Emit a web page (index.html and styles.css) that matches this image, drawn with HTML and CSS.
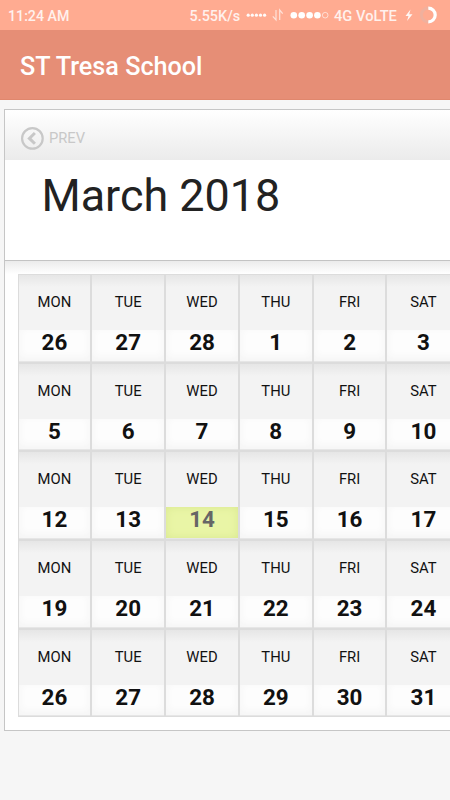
FILE: index.html
```html
<!DOCTYPE html>
<html lang="en">
<head>
<meta charset="utf-8">
<title>ST Tresa School</title>
<link rel="stylesheet" href="styles.css">
</head>
<body>
<div class="status">
  <span class="time">11:24 AM</span>
  <span class="speed">5.55K/s</span>
  <svg class="icons" width="84" height="30" viewBox="246 0 84 30">
    <g fill="#fff" opacity=".95"><circle cx="248.2" cy="15.2" r="1.6"/><circle cx="252.3" cy="15.2" r="1.6"/><circle cx="256.4" cy="15.2" r="1.6"/><circle cx="260.5" cy="15.2" r="1.6"/><circle cx="264.6" cy="15.2" r="1.6"/></g>
    <path d="M276 10v10l-3.2-3.7M279.7 20V10l3 3.7" fill="none" stroke="#fff" stroke-width="1.2" opacity=".65"/>
    <g fill="#fff"><circle cx="293.8" cy="15.2" r="3.3"/><circle cx="301.7" cy="15.2" r="3.3"/><circle cx="309.6" cy="15.2" r="3.3"/><circle cx="317.4" cy="15.2" r="3.3"/></g>
    <circle cx="325.2" cy="15.2" r="2.8" fill="none" stroke="#fff" opacity=".6"/>
  </svg>
  <span class="network">4G VoLTE</span>
  <svg class="battery" width="36" height="30" viewBox="402 0 36 30">
    <path d="M410.5 9.5l-5 6.5h3l-1.5 5 5.5-6.8h-3.3z" fill="#fff" opacity=".9"/>
    <circle cx="428.3" cy="15" r="6.9" fill="none" stroke="#f0b09d" stroke-width="3"/>
    <path d="M428.3 8.1a6.9 6.9 0 0 1 0 13.8" fill="none" stroke="#fff" stroke-width="3.2"/>
  </svg>
</div>
<header class="appbar">ST Tresa School</header>
<main class="calendar">
  <div class="nav">
    <svg width="24" height="24" viewBox="0 0 24 24" fill="none" stroke="#c8c8c8"><circle cx="12.4" cy="12.4" r="10.3" stroke-width="2.2"/><path d="M14.9 7L9.4 12.4l5.5 5.4" stroke-width="3"/></svg>
    <span>PREV</span>
  </div>
  <h1 class="month">March 2018</h1>
  <div class="body">
    <div class="grid">
      <div class="cell"><span>MON</span><b>26</b></div><div class="cell"><span>TUE</span><b>27</b></div><div class="cell"><span>WED</span><b>28</b></div><div class="cell"><span>THU</span><b>1</b></div><div class="cell"><span>FRI</span><b>2</b></div><div class="cell"><span>SAT</span><b>3</b></div>
      <div class="cell"><span>MON</span><b>5</b></div><div class="cell"><span>TUE</span><b>6</b></div><div class="cell"><span>WED</span><b>7</b></div><div class="cell"><span>THU</span><b>8</b></div><div class="cell"><span>FRI</span><b>9</b></div><div class="cell"><span>SAT</span><b>10</b></div>
      <div class="cell"><span>MON</span><b>12</b></div><div class="cell"><span>TUE</span><b>13</b></div><div class="cell today"><span>WED</span><b>14</b></div><div class="cell"><span>THU</span><b>15</b></div><div class="cell"><span>FRI</span><b>16</b></div><div class="cell"><span>SAT</span><b>17</b></div>
      <div class="cell"><span>MON</span><b>19</b></div><div class="cell"><span>TUE</span><b>20</b></div><div class="cell"><span>WED</span><b>21</b></div><div class="cell"><span>THU</span><b>22</b></div><div class="cell"><span>FRI</span><b>23</b></div><div class="cell"><span>SAT</span><b>24</b></div>
      <div class="cell"><span>MON</span><b>26</b></div><div class="cell"><span>TUE</span><b>27</b></div><div class="cell"><span>WED</span><b>28</b></div><div class="cell"><span>THU</span><b>29</b></div><div class="cell"><span>FRI</span><b>30</b></div><div class="cell"><span>SAT</span><b>31</b></div>
    </div>
  </div>
</main>
</body>
</html>
```
FILE: styles.css
```css
* { box-sizing: border-box; }
body {
  margin: 0;
  height: 800px;
  overflow: hidden;
  background: #f6f6f6;
  font-family: Roboto, sans-serif;
}
.status {
  display: flex;
  align-items: center;
  height: 30px;
  padding-left: 8px;
  background: #ffab91;
  color: #fff1ed;
  font-size: 14.2px;
  font-weight: 500;
  white-space: nowrap;
}
.status svg { flex: none; }
.time { width: 181.5px; padding-top: 1px; }
.speed { width: 56.5px; padding-top: 2px; font-size: 14.4px; }
.network { width: 68px; margin-left: 4px; padding-top: 1px; font-size: 14.7px; }
.appbar {
  height: 70px;
  padding: 2px 20px 0;
  background: #e68e76;
  border-bottom: 1px solid #e0876d;
  color: #fff;
  font-size: 25.2px;
  font-weight: 500;
  line-height: 69px;
}
.calendar {
  width: 446px;
  height: 622px;
  margin: 9px 0 0 4px;
  border: 1px solid #c6c6c6;
  border-right: 0;
  background: #fff;
  overflow: hidden;
}
.nav {
  display: flex;
  align-items: center;
  gap: 5px;
  height: 50px;
  padding: 5px 0 0 15px;
  background: linear-gradient(#fff, #ebebeb);
  color: #c8c8c8;
  font-size: 14.7px;
}
.month {
  height: 101px;
  margin: 0;
  padding: 9px 0 0 36.5px;
  border-bottom: 1px solid #c3c3c3;
  color: #222;
  font-size: 44.9px;
  font-weight: 400;
  line-height: 54px;
}
.body {
  padding: 13px 0 0 12.5px;
  background: linear-gradient(#ebebeb, #fff 13px);
}
.grid {
  display: grid;
  grid-template-columns: repeat(6, 73.8px);
  grid-auto-rows: 88.7px;
  width: 443px;
}
.cell {
  display: flex;
  flex-direction: column;
  border: 1px solid #dcdcdc;
  text-align: center;
  color: #111;
}
.cell span {
  height: 55px;
  background: linear-gradient(#e6e6e6, #f3f3f3 12px);
  font-size: 14.8px;
  line-height: 55px;
}
.cell b {
  flex: 1;
  border-bottom: 1px solid #e6e6e6;
  background: #fdfdfd;
  box-shadow: inset 0 -3px 8px #f4f4f4;
  font-size: 22.4px;
  font-weight: 700;
  line-height: 24px;
}
.today b {
  background: #e9f5a6;
  box-shadow: inset 0 0 8px #d9e890;
  color: #666;
}
```
